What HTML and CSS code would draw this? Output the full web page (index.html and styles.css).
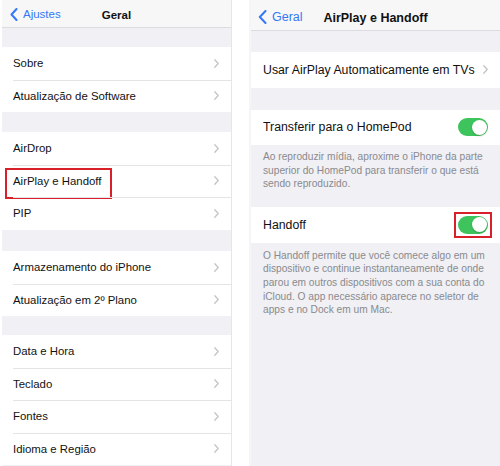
FILE: index.html
```html
<!DOCTYPE html>
<html lang="pt-BR">
<head>
  <meta charset="UTF-8" />
  <meta name="viewport" content="width=device-width, initial-scale=1.0" />
  <title>Geral / AirPlay e Handoff</title>
  <link rel="stylesheet" href="styles.css">
</head>
<body>
  <div class="screens">

    <!-- Tela 1: Ajustes > Geral -->
    <div class="screen screen-left">
      <div class="navbar">
        <div class="back">
          <svg class="back-icon" width="8" height="13" viewBox="0 0 8 13"><polyline points="6.5,1 1.5,6.5 6.5,12" /></svg>
          <span>Ajustes</span>
        </div>
        <div class="nav-title">Geral</div>
      </div>

      <div class="gap gap-a"></div>
      <div class="group">
        <div class="row"><span>Sobre</span><svg class="chev" width="5" height="9" viewBox="0 0 5 9"><polyline points="0.8,0.8 4.2,4.5 0.8,8.2" /></svg></div>
        <div class="row"><span>Atualização de Software</span><svg class="chev" width="5" height="9" viewBox="0 0 5 9"><polyline points="0.8,0.8 4.2,4.5 0.8,8.2" /></svg></div>
      </div>

      <div class="gap gap-b"></div>
      <div class="group">
        <div class="row"><span>AirDrop</span><svg class="chev" width="5" height="9" viewBox="0 0 5 9"><polyline points="0.8,0.8 4.2,4.5 0.8,8.2" /></svg></div>
        <div class="row marked"><span>AirPlay e Handoff</span><svg class="chev" width="5" height="9" viewBox="0 0 5 9"><polyline points="0.8,0.8 4.2,4.5 0.8,8.2" /></svg><div class="red-box"></div></div>
        <div class="row"><span>PIP</span><svg class="chev" width="5" height="9" viewBox="0 0 5 9"><polyline points="0.8,0.8 4.2,4.5 0.8,8.2" /></svg></div>
      </div>

      <div class="gap gap-c"></div>
      <div class="group">
        <div class="row"><span>Armazenamento do iPhone</span><svg class="chev" width="5" height="9" viewBox="0 0 5 9"><polyline points="0.8,0.8 4.2,4.5 0.8,8.2" /></svg></div>
        <div class="row"><span>Atualização em 2º Plano</span><svg class="chev" width="5" height="9" viewBox="0 0 5 9"><polyline points="0.8,0.8 4.2,4.5 0.8,8.2" /></svg></div>
      </div>

      <div class="gap gap-d"></div>
      <div class="group">
        <div class="row"><span>Data e Hora</span><svg class="chev" width="5" height="9" viewBox="0 0 5 9"><polyline points="0.8,0.8 4.2,4.5 0.8,8.2" /></svg></div>
        <div class="row"><span>Teclado</span><svg class="chev" width="5" height="9" viewBox="0 0 5 9"><polyline points="0.8,0.8 4.2,4.5 0.8,8.2" /></svg></div>
        <div class="row"><span>Fontes</span><svg class="chev" width="5" height="9" viewBox="0 0 5 9"><polyline points="0.8,0.8 4.2,4.5 0.8,8.2" /></svg></div>
        <div class="row"><span>Idioma e Região</span><svg class="chev" width="5" height="9" viewBox="0 0 5 9"><polyline points="0.8,0.8 4.2,4.5 0.8,8.2" /></svg></div>
      </div>
    </div>

    <!-- Tela 2: Geral > AirPlay e Handoff -->
    <div class="screen screen-right">
      <div class="navbar">
        <div class="back">
          <svg class="back-icon" width="9" height="14" viewBox="0 0 9 14"><polyline points="7.5,1 1.8,7 7.5,13" /></svg>
          <span>Geral</span>
        </div>
        <div class="nav-title">AirPlay e Handoff</div>
      </div>

      <div class="gap gap-e"></div>
      <div class="group">
        <div class="row row-tall"><span>Usar AirPlay Automaticamente em TVs</span><svg class="chev" width="5" height="9" viewBox="0 0 5 9"><polyline points="0.8,0.8 4.2,4.5 0.8,8.2" /></svg></div>
      </div>

      <div class="gap gap-f"></div>
      <div class="group">
        <div class="row row-tall">
          <span>Transferir para o HomePod</span>
          <div class="toggle"><div class="knob"></div></div>
        </div>
      </div>
      <p class="footer footer-a">Ao reproduzir mídia, aproxime o iPhone da parte<br>superior do HomePod para transferir o que está<br>sendo reproduzido.</p>

      <div class="group">
        <div class="row row-tall">
          <span>Handoff</span>
          <div class="toggle-mark">
            <div class="toggle"><div class="knob"></div></div>
          </div>
        </div>
      </div>
      <p class="footer footer-b">O Handoff permite que você comece algo em um<br>dispositivo e continue instantaneamente de onde<br>parou em outros dispositivos com a sua conta do<br>iCloud. O app necessário aparece no seletor de<br>apps e no Dock em um Mac.</p>
    </div>

  </div>
</body>
</html>
```

FILE: styles.css
```css
body {
  margin: 0;
  background: #fff;
  font-family: 'Liberation Sans', Arial, sans-serif;
  color: #111;
}

.screens {
  display: flex;
  width: 500px;
  height: 466px;
  overflow: hidden;
}

.screen {
  background: #f0f0f5;
  height: 466px;
}

.screen-left {
  width: 229px;
  margin-left: 2px;
  border-right: 1px solid #e6e6ea;
}

.screen-right {
  flex: 1;
  min-width: 0;
  margin-left: 17px;
  border-left: 2px solid #f5f5f8;
}

/* barra de navegação */
.navbar {
  display: flex;
  align-items: center;
  position: relative;
  background: #f7f7f8;
  border-bottom: 1px solid #dcdce0;
  box-sizing: border-box;
}

.screen-left .navbar {
  height: 28px;
  padding: 1px 0 0 8px;
}

.screen-right .navbar {
  height: 31px;
  padding: 3px 0 0 7px;
}

.back {
  display: flex;
  align-items: center;
  gap: 5px;
  color: #3478f6;
}

.back-icon polyline {
  fill: none;
  stroke: #3478f6;
  stroke-width: 2;
  stroke-linecap: round;
  stroke-linejoin: round;
}

.screen-left .back { font-size: 11.5px; }
.screen-right .back { font-size: 12.5px; }

.nav-title {
  position: absolute;
  left: 0;
  right: 0;
  text-align: center;
  font-weight: bold;
  pointer-events: none;
}

.screen-left .nav-title { font-size: 11.5px; padding-top: 1px; }
.screen-right .nav-title { font-size: 12.5px; padding-top: 3px; }

/* espaços cinzas entre grupos */
.gap-a { height: 19px; }
.gap-b { height: 20px; }
.gap-c { height: 21.5px; }
.gap-d { height: 19px; }
.gap-e { height: 21px; }
.gap-f { height: 22px; }

.group {
  background: #fff;
}

.row {
  position: relative;
  display: flex;
  align-items: center;
  justify-content: space-between;
  height: 32.5px;
  font-size: 11.4px;
  white-space: nowrap;
}

.screen-left .row {
  padding: 0 12px 0 11px;
}

.screen-left .row + .row::before {
  content: '';
  position: absolute;
  top: 0;
  left: 11px;
  right: 0;
  border-top: 1px solid #e4e4e7;
}

.row-tall {
  height: 35.5px;
  font-size: 12.3px;
  padding: 0 12px 0 12px;
}

.chev polyline {
  fill: none;
  stroke: #c4c4c8;
  stroke-width: 1.3;
  stroke-linecap: round;
  stroke-linejoin: round;
}

/* marcações vermelhas */
.red-box {
  position: absolute;
  left: 3px;
  top: 3px;
  width: 103px;
  height: 27px;
  border: 2px solid #d8202b;
}

.toggle-mark {
  border: 2px solid #d8202b;
  padding: 2px 2px;
  margin-right: -4px;
  display: flex;
}

.toggle {
  width: 30px;
  height: 18px;
  border-radius: 9px;
  background: #3ec45c;
  position: relative;
}

.knob {
  position: absolute;
  right: 1.5px;
  top: 1.5px;
  width: 15px;
  height: 15px;
  border-radius: 50%;
  background: #fff;
  box-shadow: 0 1px 2px rgba(0, 0, 0, 0.2);
}

.footer {
  margin: 0;
  color: #8a8a8e;
  font-size: 10.2px;
  line-height: 13.7px;
  padding: 5px 4px 0 12px;
  white-space: nowrap;
}

.footer-a { height: 57px; }
.footer-b { padding-top: 6px; }
```
